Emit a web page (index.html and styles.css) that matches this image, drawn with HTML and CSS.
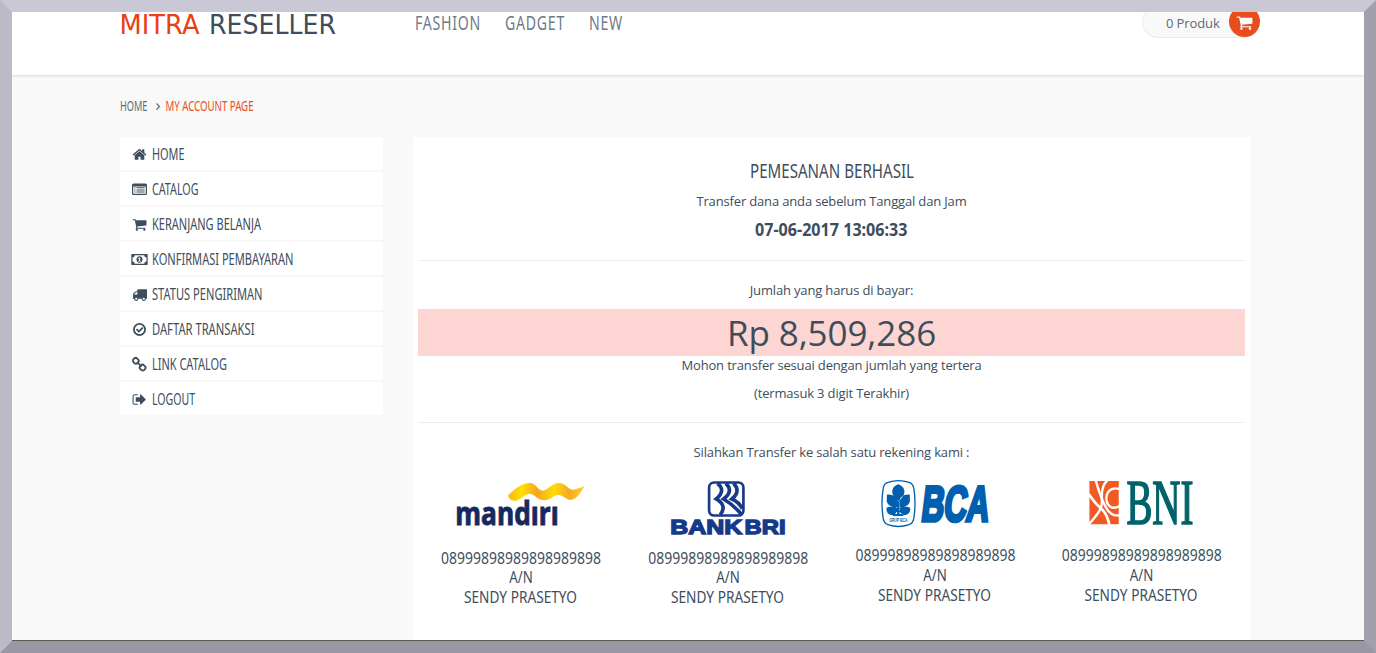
FILE: index.html
```
<!DOCTYPE html>
<html lang="id">
<head>
<meta charset="utf-8">
<title>Mitra Reseller</title>
<link rel="stylesheet" href="styles.css">
</head>
<body>
<div class="frame">
  <header class="header">
    <div class="topbar">
      <svg class="logo" width="217" height="30"><text class="brand accent" x="-.5" y="22" textLength="80" lengthAdjust="spacingAndGlyphs">MITRA</text><text class="brand" x="89" y="22" textLength="127" lengthAdjust="spacingAndGlyphs">RESELLER</text></svg>
      <nav class="nav">
        <svg width="66" height="30"><text x="0" y="18" textLength="66" lengthAdjust="spacingAndGlyphs">FASHION</text></svg>
        <svg width="60" height="30"><text x="0" y="18" textLength="60" lengthAdjust="spacingAndGlyphs">GADGET</text></svg>
        <svg width="34" height="30"><text x="0" y="18" textLength="34" lengthAdjust="spacingAndGlyphs">NEW</text></svg>
      </nav>
      <div class="cart">
        <span>0 Produk</span>
        <div class="cart-button"><svg width="17" height="17" viewBox="0 0 1792 1792"><use href="#cart"/></svg></div>
      </div>
    </div>
  </header>

  <div class="breadcrumb">
    <svg width="140" height="20"><text x="0" y="15" textLength="27.500" lengthAdjust="spacingAndGlyphs">HOME</text><path class="chevron" d="M36.500 7.500l3 3-3 3"/><text class="accent" x="45.500" y="15" textLength="88" lengthAdjust="spacingAndGlyphs">MY ACCOUNT PAGE</text></svg>
  </div>

  <div class="content">
    <ul class="menu">
      <li><svg class="icon" viewBox="0 0 1792 1792"><path d="M1472 992v480q0 26-19 45t-45 19h-384v-384h-256v384h-384q-26 0-45-19t-19-45v-480q0-1 .5-3t.5-3l575-474 575 474q1 2 1 6zm223-69l-62 74q-8 9-21 11h-3q-13 0-21-7l-692-577-692 577q-12 8-24 7-13-2-21-11l-62-74q-8-10-7-23.500t11-21.500l719-599q32-26 76-26t76 26l244 204v-195q0-14 9-23t23-9h192q14 0 23 9t9 23v408l219 182q10 8 11 21.500t-7 23.500z"/></svg><svg class="label" width="34" height="33"><text x="0" y="23" textLength="32.500" lengthAdjust="spacingAndGlyphs">HOME</text></svg></li>
      <li><svg class="icon" viewBox="0 0 15 15"><path fill-rule="evenodd" d="M1.500 1.500h12A1.500 1.500 0 0 1 15 3v8.500a1.500 1.500 0 0 1-1.500 1.500h-12A1.500 1.500 0 0 1 0 11.500V3a1.500 1.500 0 0 1 1.500-1.500zM1.200 4.500v6.800q0 .5.500.5h11.600q.5 0 .5-.5V4.500zM2.300 5.300h1.200v1H2.300zM4.500 5.300h8.200v1H4.500zM2.300 7.400h1.200v1H2.300zM4.500 7.400h8.200v1H4.500zM2.300 9.500h1.200v1H2.300zM4.500 9.500h8.200v1H4.500z"/></svg><svg class="label" width="48" height="33"><text x="0" y="23" textLength="46.500" lengthAdjust="spacingAndGlyphs">CATALOG</text></svg></li>
      <li><svg class="icon" viewBox="0 0 1792 1792"><path id="cart" d="M704 1536q0 52-38 90t-90 38-90-38-38-90 38-90 90-38 90 38 38 90zm896 0q0 52-38 90t-90 38-90-38-38-90 38-90 90-38 90 38 38 90zm128-1088v512q0 24-16.500 42.500t-40.500 21.500l-1044 122q13 60 13 70 0 16-24 64h920q26 0 45 19t19 45-19 45-45 19h-1024q-26 0-45-19t-19-45q0-11 8-31.500t16-36 21.500-40 15.500-29.500l-177-823h-204q-26 0-45-19t-19-45 19-45 45-19h256q16 0 28.500 6.500t19.500 15.500 13 24.500 8 26 5.500 29.500 4.500 26h1201q26 0 45 19t19 45z"/></svg><svg class="label" width="111" height="33"><text x="0" y="23" textLength="109" lengthAdjust="spacingAndGlyphs">KERANJANG BELANJA</text></svg></li>
      <li><svg class="icon" viewBox="0 0 15 15"><path fill-rule="evenodd" d="M0 2h15q.7 0 .7.7v9.600q0 .7-.7.7H0q-.7 0-.7-.7V2.700Q-.7 2 0 2zM2.700 3.200A2.200 2.200 0 0 1 .5 5.400v4.200a2.200 2.200 0 0 1 2.200 2.200h9.600a2.200 2.200 0 0 1 2.200-2.200V5.400a2.200 2.200 0 0 1-2.200-2.200zM7.500 4.200c4 0 4 6.600 0 6.600s-4-6.600 0-6.600zM6.200 6.200v.8l.8-.2v2h-.8v.8h2.700v-.8h-.8V5.400h-.9z"/></svg><svg class="label" width="143" height="33"><text x="0" y="23" textLength="141.500" lengthAdjust="spacingAndGlyphs">KONFIRMASI PEMBAYARAN</text></svg></li>
      <li><svg class="icon" viewBox="0 0 1792 1792"><path d="M640 1408q0-52-38-90t-90-38-90 38-38 90 38 90 90 38 90-38 38-90zm-384-512h384v-256h-158q-13 0-22 9l-195 195q-9 9-9 22v30zm1280 512q0-52-38-90t-90-38-90 38-38 90 38 90 90 38 90-38 38-90zm256-1088v1024q0 15-4 26.500t-13.500 18.500-16.500 11.500-23.500 6-22.500 2-25.500 0-22.500-.5q0 106-75 181t-181 75-181-75-75-181h-384q0 106-75 181t-181 75-181-75-75-181h-64q-3 0-22.500.5t-25.500 0-22.500-2-23.500-6-16.500-11.500-13.500-18.500-4-26.500q0-26 19-45t45-19v-320q0-8-.5-35t0-38 2.500-34.500 6.500-37 14-30.500 22.500-30l198-198q19-19 50.500-32t58.500-13h160v-192q0-26 19-45t45-19h1024q26 0 45 19t19 45z"/></svg><svg class="label" width="112" height="33"><text x="0" y="23" textLength="110.500" lengthAdjust="spacingAndGlyphs">STATUS PENGIRIMAN</text></svg></li>
      <li><svg class="icon" viewBox="0 0 15 15"><circle class="line" cx="7.500" cy="7.500" r="5.600"/><path class="line" d="M4.500 7.200l2.400 2.400 3.900-3.900"/></svg><svg class="label" width="104" height="33"><text x="0" y="23" textLength="102.500" lengthAdjust="spacingAndGlyphs">DAFTAR TRANSAKSI</text></svg></li>
      <li><svg class="icon" viewBox="0 0 15 15"><rect class="line" x="1" y="1.200" width="5.600" height="5.200" rx="2.200" transform="rotate(45 3.800 3.800)"/><rect class="line" x="7.800" y="8" width="5.600" height="5.200" rx="2.200" transform="rotate(45 10.600 10.600)"/><path class="line" d="M5 5l4.500 4.700"/></svg><svg class="label" width="76" height="33"><text x="0" y="23" textLength="75" lengthAdjust="spacingAndGlyphs">LINK CATALOG</text></svg></li>
      <li><svg class="icon" viewBox="0 0 1792 1792"><path d="M704 1440q0 4 1 20t.5 26.500-3 23.500-10 19.500-20.500 6.500h-320q-119 0-203.500-84.500t-84.500-203.500v-704q0-119 84.500-203.500t203.500-84.500h320q13 0 22.500 9.500t9.500 22.500q0 4 1 20t.5 26.500-3 23.500-10 19.500-20.500 6.500h-320q-66 0-113 47t-47 113v704q0 66 47 113t113 47h312l11.500 1 11.500 3 8 5.500 7 9 2 13.500zm928-544q0 26-19 45l-544 544q-19 19-45 19t-45-19-19-45v-288h-448q-26 0-45-19t-19-45v-384q0-26 19-45t45-19h448v-288q0-26 19-45t45-19 45 19l544 544q19 19 19 45z"/></svg><svg class="label" width="44" height="33"><text x="0" y="23" textLength="43" lengthAdjust="spacingAndGlyphs">LOGOUT</text></svg></li>
    </ul>

    <main class="panel">
      <svg class="title" width="166" height="25"><text x="1" y="18" textLength="164" lengthAdjust="spacingAndGlyphs">PEMESANAN BERHASIL</text></svg>
      <p class="before-date">Transfer dana anda sebelum Tanggal dan Jam</p>
      <svg class="date" width="154" height="25"><text x="0" y="21" textLength="152.500" lengthAdjust="spacingAndGlyphs">07-06-2017 13:06:33</text></svg>
      <hr>
      <p>Jumlah yang harus di bayar:</p>
      <div class="amount">Rp 8,509,286</div>
      <p>Mohon transfer sesuai dengan jumlah yang tertera</p>
      <p class="last">(termasuk 3 digit Terakhir)</p>
      <hr>
      <p class="last">Silahkan Transfer ke salah satu rekening kami :</p>
      <div class="banks">
        <div class="bank">
          <svg class="bank-logo" viewBox="0 0 206.750 75">
            <defs><linearGradient id="gold"><stop offset="0" stop-color="#f9b512"/><stop offset=".18" stop-color="#ffe100"/><stop offset=".38" stop-color="#f9a51b"/><stop offset=".6" stop-color="#ffde08"/><stop offset=".8" stop-color="#f7a823"/><stop offset="1" stop-color="#ffd21f"/></linearGradient></defs>
            <g transform="translate(12 0) scale(.33333)">
              <path fill="url(#gold)" d="M234 77C250 60 270 42 298 39C318 37 322 61 338 62C356 60 364 40 384 39C408 38 412 59 430 59Q446 57 463 48Q450 76 431 88C410 94 402 76 384 74C368 78 360 91 340 91C318 87 314 71 296 71C280 75 272 91 253 93Q238 90 234 77z"/>
              <text class="mandiri" x="76" y="164" textLength="310" lengthAdjust="spacingAndGlyphs">mandırı</text>
            </g>
          </svg>
          <svg class="account" viewBox="0 0 206.750 70"><text x="103" y="19" textLength="160" lengthAdjust="spacingAndGlyphs">08999898989898989898</text><text x="103" y="38" textLength="23.500" lengthAdjust="spacingAndGlyphs">A/N</text><text x="102.500" y="58" textLength="113" lengthAdjust="spacingAndGlyphs">SENDY PRASETYO</text></svg>
        </div>
        <div class="bank">
          <svg class="bank-logo" viewBox="0 0 206.750 75">
            <g transform="translate(15.250 0) scale(.33333)" fill="#17398a">
              <rect x="206.500" y="37.500" width="103" height="99" rx="15" fill="#fff" stroke="#17398a" stroke-width="8"/>
              <g fill="none" stroke="#17398a" stroke-width="11"><path d="M232 40Q258 62 228 87Q262 106 240 134"/><path d="M257 40Q281 64 250 87Q282 106 304 134"/><path d="M280 40Q303 64 275 87Q296 96 306 116"/></g>
              <text class="bri" x="90" y="192" textLength="216" lengthAdjust="spacingAndGlyphs">BANK</text><text class="bri" x="313" y="192" textLength="123" lengthAdjust="spacingAndGlyphs">BRI</text>
            </g>
          </svg>
          <svg class="account" viewBox="0 0 206.750 70"><text x="103.250" y="19" textLength="160" lengthAdjust="spacingAndGlyphs">08999898989898989898</text><text x="103" y="38" textLength="23.500" lengthAdjust="spacingAndGlyphs">A/N</text><text x="102.500" y="58" textLength="113" lengthAdjust="spacingAndGlyphs">SENDY PRASETYO</text></svg>
        </div>
        <div class="bank">
          <svg class="bank-logo" viewBox="0 0 206.750 75">
            <g transform="translate(18.500 0) scale(.33333)" fill="#0060af">
              <path fill="#fff" stroke="#0060af" stroke-width="4" d="M112 37Q144 27 176 37Q187 40 190 55Q197 100 190 145Q187 160 176 164Q144 175 112 164Q101 160 98 145Q91 100 98 55Q101 40 112 37z"/>
              <path d="M143 43C160 48 168 65 156 80Q151 89 143 94Q135 89 131 80C119 65 127 48 143 43zM109 74C128 72 140 82 141 97V112C122 113 106 103 109 88zM178 74C159 72 147 82 146 97V112C165 113 181 103 178 88zM108 113Q130 104 142 116Q140 134 122 135Q106 131 108 113zM179 113Q157 104 145 116Q147 134 165 135Q181 131 179 113zM140 94h7v38h12v6h-32v-6h13z"/>
              <text class="grup" x="116" y="157" textLength="55" lengthAdjust="spacingAndGlyphs">GRUP BCA</text>
              <g transform="translate(0 153) skewX(-7)"><text class="bca" x="209" y="0" textLength="203" lengthAdjust="spacingAndGlyphs">BCA</text></g>
            </g>
          </svg>
          <svg class="account" viewBox="0 0 206.750 70"><text x="103.500" y="16" textLength="160" lengthAdjust="spacingAndGlyphs">08999898989898989898</text><text x="103" y="36" textLength="23.500" lengthAdjust="spacingAndGlyphs">A/N</text><text x="102.500" y="56" textLength="113" lengthAdjust="spacingAndGlyphs">SENDY PRASETYO</text></svg>
        </div>
        <div class="bank">
          <svg class="bank-logo" viewBox="0 0 206.750 75">
            <g transform="translate(16.750 0) scale(.33333)">
              <path fill="#f15a22" d="M104 33h88v130h-88z"/>
              <g fill="none" stroke="#fff" stroke-width="7"><path d="M102 72Q121 101 143 119Q157 132 164 165" stroke-width="8"/><path d="M123 31Q137 82 154 113Q169 140 194 136"/><path d="M158 31C129 57 150 99 136 119Q125 139 102 163"/><path d="M194 57C163 49 151 73 156 94C160 112 177 119 194 108"/></g>
              <text class="bni" x="215" y="162" textLength="201" lengthAdjust="spacingAndGlyphs">BNI</text>
            </g>
          </svg>
          <svg class="account" viewBox="0 0 206.750 70"><text x="103.750" y="16" textLength="160" lengthAdjust="spacingAndGlyphs">08999898989898989898</text><text x="103.500" y="36" textLength="23.500" lengthAdjust="spacingAndGlyphs">A/N</text><text x="103" y="56" textLength="113" lengthAdjust="spacingAndGlyphs">SENDY PRASETYO</text></svg>
        </div>
      </div>
    </main>
  </div>
</div>
</body>
</html>
```
FILE: styles.css
```
* { box-sizing: border-box; }
body {
  margin: 0;
  font: 13px/18px "Open Sans", sans-serif;
  color: #3e4d5c;
}
svg { display: block; flex: none; fill: #3e4d5c; overflow: visible; }
.frame {
  height: 653px;
  overflow: hidden;
  display: flex;
  flex-direction: column;
  background: #f9f9f9;
  border: 12px solid;
  border-color: #cbc8d5 #a3a0ae #9a97a4 #bdbac8;
  box-shadow: inset 0 -1px #5c574f;
}
.accent { fill: #e84d1c; }

.header {
  flex: none;
  height: 63px;
  background: #fff;
  box-shadow: 0 1px 3px rgba(0, 0, 0, .14);
}
.topbar {
  display: flex;
  align-items: flex-start;
  width: 1140px;
  margin-left: 108px;
  height: 32px;
  overflow: hidden;
}
.brand { font: 26px "DejaVu Sans", sans-serif; }
.brand.accent { fill: #e84112; }
.nav {
  display: flex;
  gap: 24px;
  margin-left: 78px;
}
.nav svg { fill: #6d7b88; font: 19.500px "Noto Sans", sans-serif; letter-spacing: 1px; }
.cart {
  display: flex;
  align-items: center;
  justify-content: space-between;
  width: 118px;
  height: 32px;
  margin: -6px 0 0 auto;
  padding-left: 23px;
  background: #f9f9f9;
  border: 1px solid #ececec;
  border-right: 0;
  border-radius: 16px;
  color: #5f6973;
  letter-spacing: -.1px;
}
.cart span { margin-top: 2px; }
.cart-button {
  display: grid;
  place-items: center;
  width: 31px;
  height: 31px;
  margin-top: -1px;
  border-radius: 50%;
  background: #e84d1c;
}
.cart-button svg { fill: #fff; margin-top: 1px; }

.breadcrumb { flex: none; margin: 21px 0 0 108px; font: 14px "Noto Sans", sans-serif; }
.breadcrumb svg { fill: #5c6b79; }
.breadcrumb .accent { fill: #e84d1c; }
.breadcrumb .chevron { fill: none; stroke: #5c6b79; stroke-width: 1.200; }

.content {
  flex: 1;
  display: grid;
  grid-template-columns: 263px 837px;
  gap: 30px;
  margin: 21px 0 1px 108px;
}
.menu {
  align-self: start;
  display: grid;
  gap: 2px;
  margin: 0;
  padding: 0;
  list-style: none;
  background: #f7f7f7;
}
.menu li {
  display: flex;
  align-items: center;
  gap: 5px;
  height: 33px;
  padding-left: 12px;
  background: #fff;
}
.icon { width: 15px; height: 15px; margin-top: 2px; }
.icon .line { fill: none; stroke: #3e4d5c; stroke-width: 1.800; }
.label { font: 15.500px "Noto Sans", sans-serif; }

.panel {
  display: flex;
  flex-direction: column;
  align-items: center;
  padding: 23px 5px 0;
  background: #fff;
}
.title { font: 19.500px "Noto Sans", sans-serif; }
.date { font: bold 18px "Noto Sans", sans-serif; }
.panel p { margin: 0 0 10px; letter-spacing: -.16px; }
.panel .title { margin-bottom: 7px; }
.panel .before-date { margin-bottom: 5px; }
.panel .last { margin-bottom: 0; }
.panel hr {
  width: 100%;
  height: 1px;
  margin: 20px 0;
  border: 0;
  background: #eee;
}
.amount {
  width: 100%;
  height: 47px;
  background: #fdd5d2;
  font-size: 35px;
  line-height: 48px;
  letter-spacing: -.1px;
  text-align: center;
}
.banks {
  display: grid;
  grid-template-columns: repeat(4, 206.750px);
  margin-top: 9px;
}
.bank-logo { width: 206.750px; height: 75px; }
.account {
  width: 206.750px;
  height: 70px;
  font: 16px "Noto Sans", sans-serif;
  text-anchor: middle;
}
.mandiri { font: bold 98px "Open Sans", sans-serif; fill: #16295f; stroke: #16295f; stroke-width: 3; }
.bri { font: bold 60px "Liberation Sans", sans-serif; stroke: #17398a; stroke-width: 4; }
.grup { font: bold 15px "Liberation Sans", sans-serif; }
.bca { font: bold 149px "Liberation Sans", sans-serif; stroke: #0060af; stroke-width: 11; }
.bni { font: 190px "Liberation Serif", serif; fill: #00626b; stroke: #00626b; stroke-width: 5; }
```
